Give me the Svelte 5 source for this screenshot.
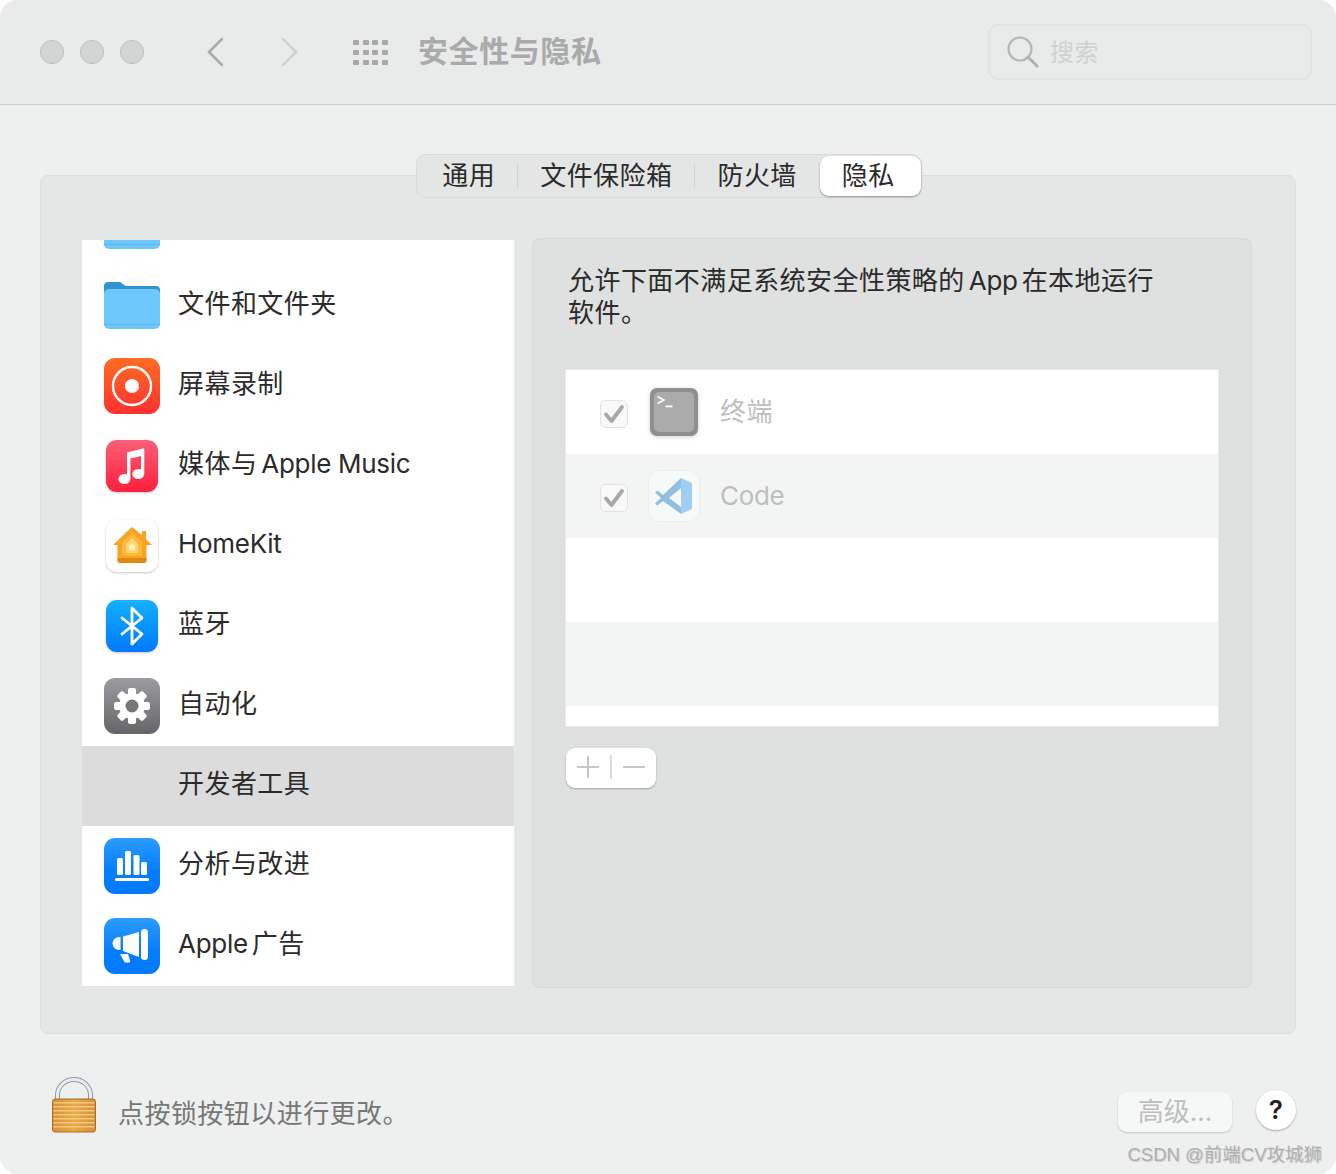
<script>
  const rows = [
    { icon: 'folder', label: '' },
    { icon: 'folder', label: '文件和文件夹' },
    { icon: 'record', label: '屏幕录制' },
    { icon: 'music', pre: '媒体与', en: 'Apple Music' },
    { icon: 'home', en: 'HomeKit' },
    { icon: 'bluetooth', label: '蓝牙' },
    { icon: 'gear', label: '自动化' },
    { icon: '', label: '开发者工具', selected: true },
    { icon: 'chart', label: '分析与改进' },
    { icon: 'ads', en: 'Apple', label: '广告' }
  ];
  const tabs = ['通用', '文件保险箱', '防火墙'];
  const teeth = [0, 45, 90, 135, 180, 225, 270, 315];
</script>

{#snippet listIcon(kind)}
  {#if kind === 'folder'}
    <svg class="ico" viewBox="0 0 56 56">
      <path d="M0 8a4 4 0 0 1 4-4h11c3 0 5 4 8 4h29a4 4 0 0 1 4 4v14H0z" fill="#2f95d2" />
      <rect y="11" width="56" height="40" rx="5" fill="#6fc8fb" />
      <rect y="46" width="56" height="1" fill="#5cb6ea" />
    </svg>
  {:else if kind === 'record'}
    <svg class="ico" viewBox="0 0 56 56">
      <rect width="56" height="56" rx="11" fill="url(#recGrad)" />
      <circle cx="28" cy="28" r="19" fill="none" stroke="#fff" stroke-width="2.400" />
      <circle cx="28" cy="28" r="7" fill="#fff" />
    </svg>
  {:else if kind === 'music'}
    <svg class="ico shadow" viewBox="0 0 56 56">
      <rect x="2" y="2" width="52" height="52" rx="11" fill="url(#musicGrad)" />
      <path d="M23 14.500 39 10.500a1 1 0 0 1 1.300 1V36a6 5 0 1 1-3.300-4.400V18L26.400 20.500V41a6 5 0 1 1-3.400-4.400z" fill="#fff" />
    </svg>
  {:else if kind === 'home'}
    <svg class="ico shadow" viewBox="0 0 56 56">
      <rect x="2" y="2" width="52" height="52" rx="11" fill="#fff" />
      <path d="M28 9 38 17V13h4v8l6 6h-5.500v15a3 3 0 0 1-3 3h-23a3 3 0 0 1-3-3V27H9z" fill="#f8a423" />
      <path d="M13.500 40h29v2a3 3 0 0 1-3 3h-23a3 3 0 0 1-3-3z" fill="#e08a12" />
      <path d="M28 15 38 24v14H18V24z" fill="#fcb93c" />
      <path d="M28 20 34 26v9H22v-9z" fill="#fdd76e" />
      <path d="M28 25 31 28v4h-6v-4z" fill="#fdf3c0" />
    </svg>
  {:else if kind === 'bluetooth'}
    <svg class="ico shadow" viewBox="0 0 56 56">
      <rect x="2" y="2" width="52" height="52" rx="11" fill="url(#btGrad)" />
      <path d="M18 20 38 36 28 46V10L38 20 18 36" fill="none" stroke="#fff" stroke-width="2.800" stroke-linejoin="round" stroke-linecap="round" />
    </svg>
  {:else if kind === 'gear'}
    <svg class="ico" viewBox="0 0 56 56">
      <rect width="56" height="56" rx="11" fill="url(#gearGrad)" />
      {#each teeth as a}
        <rect x="24" y="10" width="8" height="10" rx="2" fill="#fff" transform="rotate({a} 28 28)" />
      {/each}
      <circle cx="28" cy="28" r="13" fill="#fff" />
      <circle cx="28" cy="28" r="6.500" fill="#77777a" />
    </svg>
  {:else if kind === 'chart'}
    <svg class="ico" viewBox="0 0 56 56">
      <rect width="56" height="56" rx="11" fill="url(#blueGrad)" />
      <g fill="#fff">
        <rect x="13" y="20" width="6" height="17" rx="1.500" />
        <rect x="21" y="13" width="6" height="24" rx="1.500" />
        <rect x="29.500" y="17" width="6" height="20" rx="1.500" />
        <rect x="37" y="24" width="6" height="13" rx="1.500" />
        <rect x="11" y="40" width="34" height="3" rx="1.500" />
      </g>
    </svg>
  {:else if kind === 'ads'}
    <svg class="ico" viewBox="0 0 56 56">
      <rect width="56" height="56" rx="11" fill="url(#blueGrad)" />
      <g fill="#fff">
        <path d="M15 19h1.500v13H15a6.500 6.500 0 0 1 0-13z" />
        <path d="M19 18.500 35 14v25L19 33z" />
        <rect x="37" y="11" width="7" height="31" rx="3.500" />
        <path d="M16 36h8l2 6.500a1.500 1.500 0 0 1-1.500 2H22a2 2 0 0 1-2-1.300z" />
      </g>
    </svg>
  {:else}
    <span class="ico"></span>
  {/if}
{/snippet}

<svg class="defs" width="0" height="0" aria-hidden="true">
  <defs>
    <linearGradient id="recGrad" x1="0" y1="0" x2="0" y2="1"><stop offset="0" stop-color="#ff6c23" /><stop offset="1" stop-color="#ff3131" /></linearGradient>
    <linearGradient id="musicGrad" x1="0" y1="0" x2="0" y2="1"><stop offset="0" stop-color="#fb5f78" /><stop offset="1" stop-color="#fb203c" /></linearGradient>
    <linearGradient id="btGrad" x1="0" y1="0" x2="0" y2="1"><stop offset="0" stop-color="#13b0fb" /><stop offset="1" stop-color="#0179ff" /></linearGradient>
    <linearGradient id="gearGrad" x1="0" y1="0" x2="0" y2="1"><stop offset="0" stop-color="#9c9ca0" /><stop offset="1" stop-color="#666669" /></linearGradient>
    <linearGradient id="blueGrad" x1="0" y1="0" x2="0" y2="1"><stop offset="0" stop-color="#2c9cff" /><stop offset="0.6" stop-color="#057dff" /><stop offset="1" stop-color="#017aff" /></linearGradient>
    <linearGradient id="lockBody" x1="0" y1="0" x2="1" y2="0"><stop offset="0" stop-color="#d98f35" /><stop offset="0.5" stop-color="#eba94e" /><stop offset="1" stop-color="#d98f35" /></linearGradient>
  </defs>
</svg>

<div class="window">
  <header class="toolbar">
    <div class="lights"><i></i><i></i><i></i></div>
    <svg class="chev back" width="16" height="28" viewBox="0 0 16 28"><path d="M15 1 2 14l13 13" /></svg>
    <svg class="chev fwd" width="16" height="28" viewBox="0 0 16 28"><path d="M1 1l13 13L1 27" /></svg>
    <div class="apps">
      {#each Array(12) as _}<b></b>{/each}
    </div>
    <div class="title">安全性与隐私</div>
    <div class="search">
      <svg width="32" height="32" viewBox="0 0 32 32"><circle cx="13" cy="13" r="11.500" fill="none" stroke="#b4b6b6" stroke-width="2.200" /><path d="M21 21l9 9" stroke="#b0b2b2" stroke-width="3" stroke-linecap="round" /></svg>
      <span>搜索</span>
    </div>
  </header>

  <main class="content">
    <section class="panel">
      <div class="tabs-row">
        <div class="tabs">
          {#each tabs as t, i}
            {#if i > 0}<span class="sep"></span>{/if}
            <span class="tab">{t}</span>
          {/each}
          <span class="tab active">隐私</span>
        </div>
      </div>

      <div class="columns">
        <div class="list">
          <div class="list-inner">
            {#each rows as r}
              <div class="row" class:selected={r.selected}>
                {@render listIcon(r.icon)}
                <span class="label">{r.pre ?? ''}{#if r.en}<span class="en" class:lead={!r.pre}>{r.en}</span>{/if}{r.label ?? ''}</span>
              </div>
            {/each}
          </div>
        </div>

        <div class="pane">
          <p class="desc">允许下面不满足系统安全性策略的<span class="en">App</span>在本地运行<br />软件。</p>
          <div class="table">
            <div class="trow">
              <span class="check"><svg width="22" height="22" viewBox="0 0 22 22"><path d="M3 11.500 8.500 18 19 4" /></svg></span>
              <svg class="app-ico term" width="50" height="50" viewBox="0 0 50 50">
                <rect x="1" y="1" width="48" height="48" rx="7" fill="#8f8f8f" />
                <rect x="5" y="5" width="40" height="40" rx="5" fill="#ababab" />
                <path d="M8.500 9.500 15 13 8.500 16.500" fill="none" stroke="#fff" stroke-width="1.500" />
                <rect x="16.500" y="18.500" width="7" height="1.800" fill="#fff" />
              </svg>
              <span class="app-name">终端</span>
            </div>
            <div class="trow alt">
              <span class="check"><svg width="22" height="22" viewBox="0 0 22 22"><path d="M3 11.500 8.500 18 19 4" /></svg></span>
              <svg class="app-ico" width="52" height="52" viewBox="0 0 52 52">
                <rect x="0.500" y="0.500" width="51" height="51" rx="11" fill="#f7f9f9" stroke="#eceeee" />
                <path d="M33 8 15 25 9.500 20.500 7 22.500 13 28 7 33.500l2.500 2L15 31l18 13z" fill="#8fc0e2" />
                <path d="M33 18 21 28l12 9z" fill="#f7f9f9" />
                <path d="M33 8l11 5v26l-11 5z" fill="#9fd0f3" />
              </svg>
              <span class="app-name en">Code</span>
            </div>
            <div class="trow"></div>
            <div class="trow alt"></div>
          </div>
          <div class="plus-minus">
            <svg width="22" height="22" viewBox="0 0 22 22"><path d="M0 11h22M11 0v22" stroke="#c6c6c6" stroke-width="2" /></svg>
            <span class="pm-sep"></span>
            <svg width="22" height="22" viewBox="0 0 22 22"><path d="M0 11h22" stroke="#c6c6c6" stroke-width="2" /></svg>
          </div>
        </div>
      </div>
    </section>

    <footer class="footer">
      <svg class="lock" width="44" height="56" viewBox="0 0 44 56">
        <path d="M5.500 24V18a16.500 15.500 0 0 1 33 0v6" fill="none" stroke="#8f9aa3" stroke-width="5" />
        <path d="M5.500 24V18a16.500 15.500 0 0 1 33 0v6" fill="none" stroke="#e9edf0" stroke-width="3" />
        <rect x="0.500" y="22" width="43" height="33" rx="2.500" fill="url(#lockBody)" stroke="#ad6d22" stroke-width="1" />
        {#each [25, 29, 33, 37, 41, 45, 49] as y}
          <rect x="1.500" {y} width="41" height="1.500" fill="#f6cb7e" />
        {/each}
      </svg>
      <span class="hint">点按锁按钮以进行更改。</span>
      <span class="advanced">高级...</span>
      <span class="help">?</span>
    </footer>
  </main>

  <div class="watermark">CSDN @前端CV攻城狮</div>
</div>

<style>
  :global(body) {
    background: #fff;
  }

  .defs {
    position: absolute;
  }

  .window {
    position: relative;
    width: 1336px;
    height: 1174px;
    border-radius: 18px;
    overflow: hidden;
    background: #eef0f0;
    font-family: Inter, "Noto Sans CJK SC", sans-serif;
    font-size: 26px;
    line-height: 32px;
    letter-spacing: 0.45px;
    color: #2b2b2b;
  }

  .toolbar {
    display: flex;
    align-items: center;
    height: 104px;
    padding-left: 40px;
    padding-right: 24px;
    background: #e9eaea;
    border-bottom: 1px solid #cdcece;
    box-sizing: content-box;
  }

  .lights {
    display: flex;
    gap: 16px;
    margin-right: 63px;
  }

  .lights i {
    width: 24px;
    height: 24px;
    border-radius: 50%;
    background: #d3d5d4;
    border: 1px solid #bcbebd;
    box-sizing: border-box;
  }

  .chev {
    fill: none;
    stroke-width: 2.600;
    stroke-linecap: round;
    stroke-linejoin: round;
  }

  .back {
    stroke: #a9abab;
    margin-right: 59px;
  }

  .fwd {
    stroke: #cfd1d1;
    margin-right: 55px;
  }

  .apps {
    display: grid;
    grid-template-columns: repeat(4, 6px);
    grid-auto-rows: 5px;
    gap: 5px 3.670px;
    margin-right: 30px;
  }

  .apps b {
    background: #a8a8a8;
    border-radius: 1px;
  }

  .title {
    font-size: 30px;
    line-height: 40px;
    letter-spacing: 0.6px;
    font-weight: 700;
    color: #a9abab;
    margin-top: -2px;
  }

  .search {
    display: flex;
    align-items: center;
    gap: 11px;
    margin-left: auto;
    width: 324px;
    height: 56px;
    padding-left: 17px;
    box-sizing: border-box;
    border: 2px solid #e1e2e2;
    border-radius: 10px;
    font-size: 24px;
    color: #cfd1d1;
  }

  .search span {
    margin-top: 2px;
  }

  .content {
    padding: 70px 40px 0;
  }

  .panel {
    height: 859px;
    box-sizing: border-box;
    background: #e5e6e6;
    border: 1px solid #dcdddd;
    border-radius: 8px;
  }

  .tabs-row {
    display: flex;
    justify-content: center;
    margin-top: -22px;
    padding-left: 2px;
  }

  .tabs {
    display: flex;
    align-items: center;
    height: 44px;
    box-sizing: border-box;
    padding-left: 3px;
    background: #e4e5e5;
    border: 1px solid #d9dada;
    border-radius: 10px;
  }

  .tab {
    padding: 0 22px;
    line-height: 40px;
  }

  .sep {
    width: 1px;
    height: 24px;
    background: #d0d1d1;
  }

  .tab.active {
    margin-left: 1px;
    padding: 0 26px 0 22px;
    background: #fff;
    border-radius: 9px;
    box-shadow: 0 1px 2px rgba(0, 0, 0, 0.35);
  }

  .columns {
    display: flex;
    align-items: flex-start;
    gap: 18px;
    margin-top: 40px;
    padding-left: 41px;
  }

  .list {
    width: 432px;
    height: 746px;
    margin-top: 2px;
    overflow: hidden;
    background: #fff;
  }

  .list-inner {
    margin-top: -54px;
  }

  .row {
    display: flex;
    align-items: center;
    gap: 18px;
    height: 80px;
    padding-left: 22px;
  }

  .row .label {
    padding-bottom: 4px;
  }

  .row.selected {
    background: #dcdcdc;
  }

  .en {
    margin: 0 4px;
    letter-spacing: -0.3px;
  }

  .en.lead {
    margin-left: 0;
  }

  .ico {
    display: block;
    width: 56px;
    height: 56px;
    flex: none;
  }

  .ico.shadow {
    filter: drop-shadow(0 1px 1px rgba(0, 0, 0, 0.22));
  }

  .pane {
    width: 720px;
    height: 750px;
    box-sizing: border-box;
    padding: 26px 32px 0;
    background: #dfe0e0;
    border: 1px solid #d8d9d9;
    border-radius: 8px;
  }

  .desc {
    margin: 0 0 40px 3px;
    line-height: 32px;
  }

  .table {
    width: 652px;
    border: 1px solid #e9eaea;
    background: #fff;
    padding-bottom: 20px;
  }

  .trow {
    display: flex;
    align-items: center;
    height: 84px;
    padding-left: 34px;
  }

  .trow.alt {
    background: #f3f5f4;
  }

  .check {
    display: flex;
    align-items: center;
    justify-content: center;
    width: 28px;
    height: 28px;
    box-sizing: border-box;
    margin-top: 4px;
    margin-right: 21px;
    border: 1px solid #e2e3e3;
    border-radius: 6px;
    background: #f9f9f9;
  }

  .check path {
    fill: none;
    stroke: #a8a8a8;
    stroke-width: 3.800;
    stroke-linejoin: round;
    stroke-linecap: round;
  }

  .app-ico {
    flex: none;
    margin-right: 20px;
    margin-left: -1px;
  }

  .app-ico.term {
    margin-left: 0;
    margin-right: 21px;
    filter: drop-shadow(0 1px 2px rgba(90, 130, 150, 0.35));
  }

  .app-name {
    color: #bdbebe;
  }

  .app-name.en {
    margin: 0;
  }

  .plus-minus {
    display: flex;
    align-items: center;
    justify-content: center;
    gap: 11px;
    width: 90px;
    height: 40px;
    box-sizing: border-box;
    padding-bottom: 2px;
    margin-top: 21px;
    margin-left: 1px;
    background: #fff;
    border-radius: 9px;
    box-shadow: 0 1px 2px rgba(0, 0, 0, 0.28);
  }

  .pm-sep {
    width: 2px;
    height: 24px;
    background: #dcdcdc;
  }

  .footer {
    display: flex;
    align-items: center;
    height: 56px;
    margin-top: 43px;
    padding-left: 12px;
  }

  .lock {
    flex: none;
    margin-right: 22px;
  }

  .hint {
    margin-top: 18px;
    color: #777;
  }

  .advanced {
    margin-left: auto;
    width: 114px;
    height: 40px;
    line-height: 40px;
    letter-spacing: 0;
    margin-top: 14px;
    margin-right: 24px;
    text-align: center;
    background: #f6f8f7;
    border-radius: 9px;
    color: #bdbebe;
    box-shadow: 0 1px 2px rgba(0, 0, 0, 0.18);
  }

  .help {
    width: 40px;
    height: 40px;
    line-height: 40px;
    margin-top: 10px;
    text-align: center;
    font-weight: 600;
    border-radius: 50%;
    background: #fff;
    color: #222;
    box-shadow: 0 1px 2px rgba(0, 0, 0, 0.3);
  }

  .watermark {
    position: absolute;
    right: 14px;
    bottom: 6px;
    font-family: "Liberation Sans", "Noto Sans CJK SC", sans-serif;
    font-size: 18.500px;
    line-height: 26px;
    letter-spacing: 0;
    color: #b0b0b0;
    text-shadow: 1px 1px 1px rgba(0, 0, 0, 0.15);
  }
</style>
